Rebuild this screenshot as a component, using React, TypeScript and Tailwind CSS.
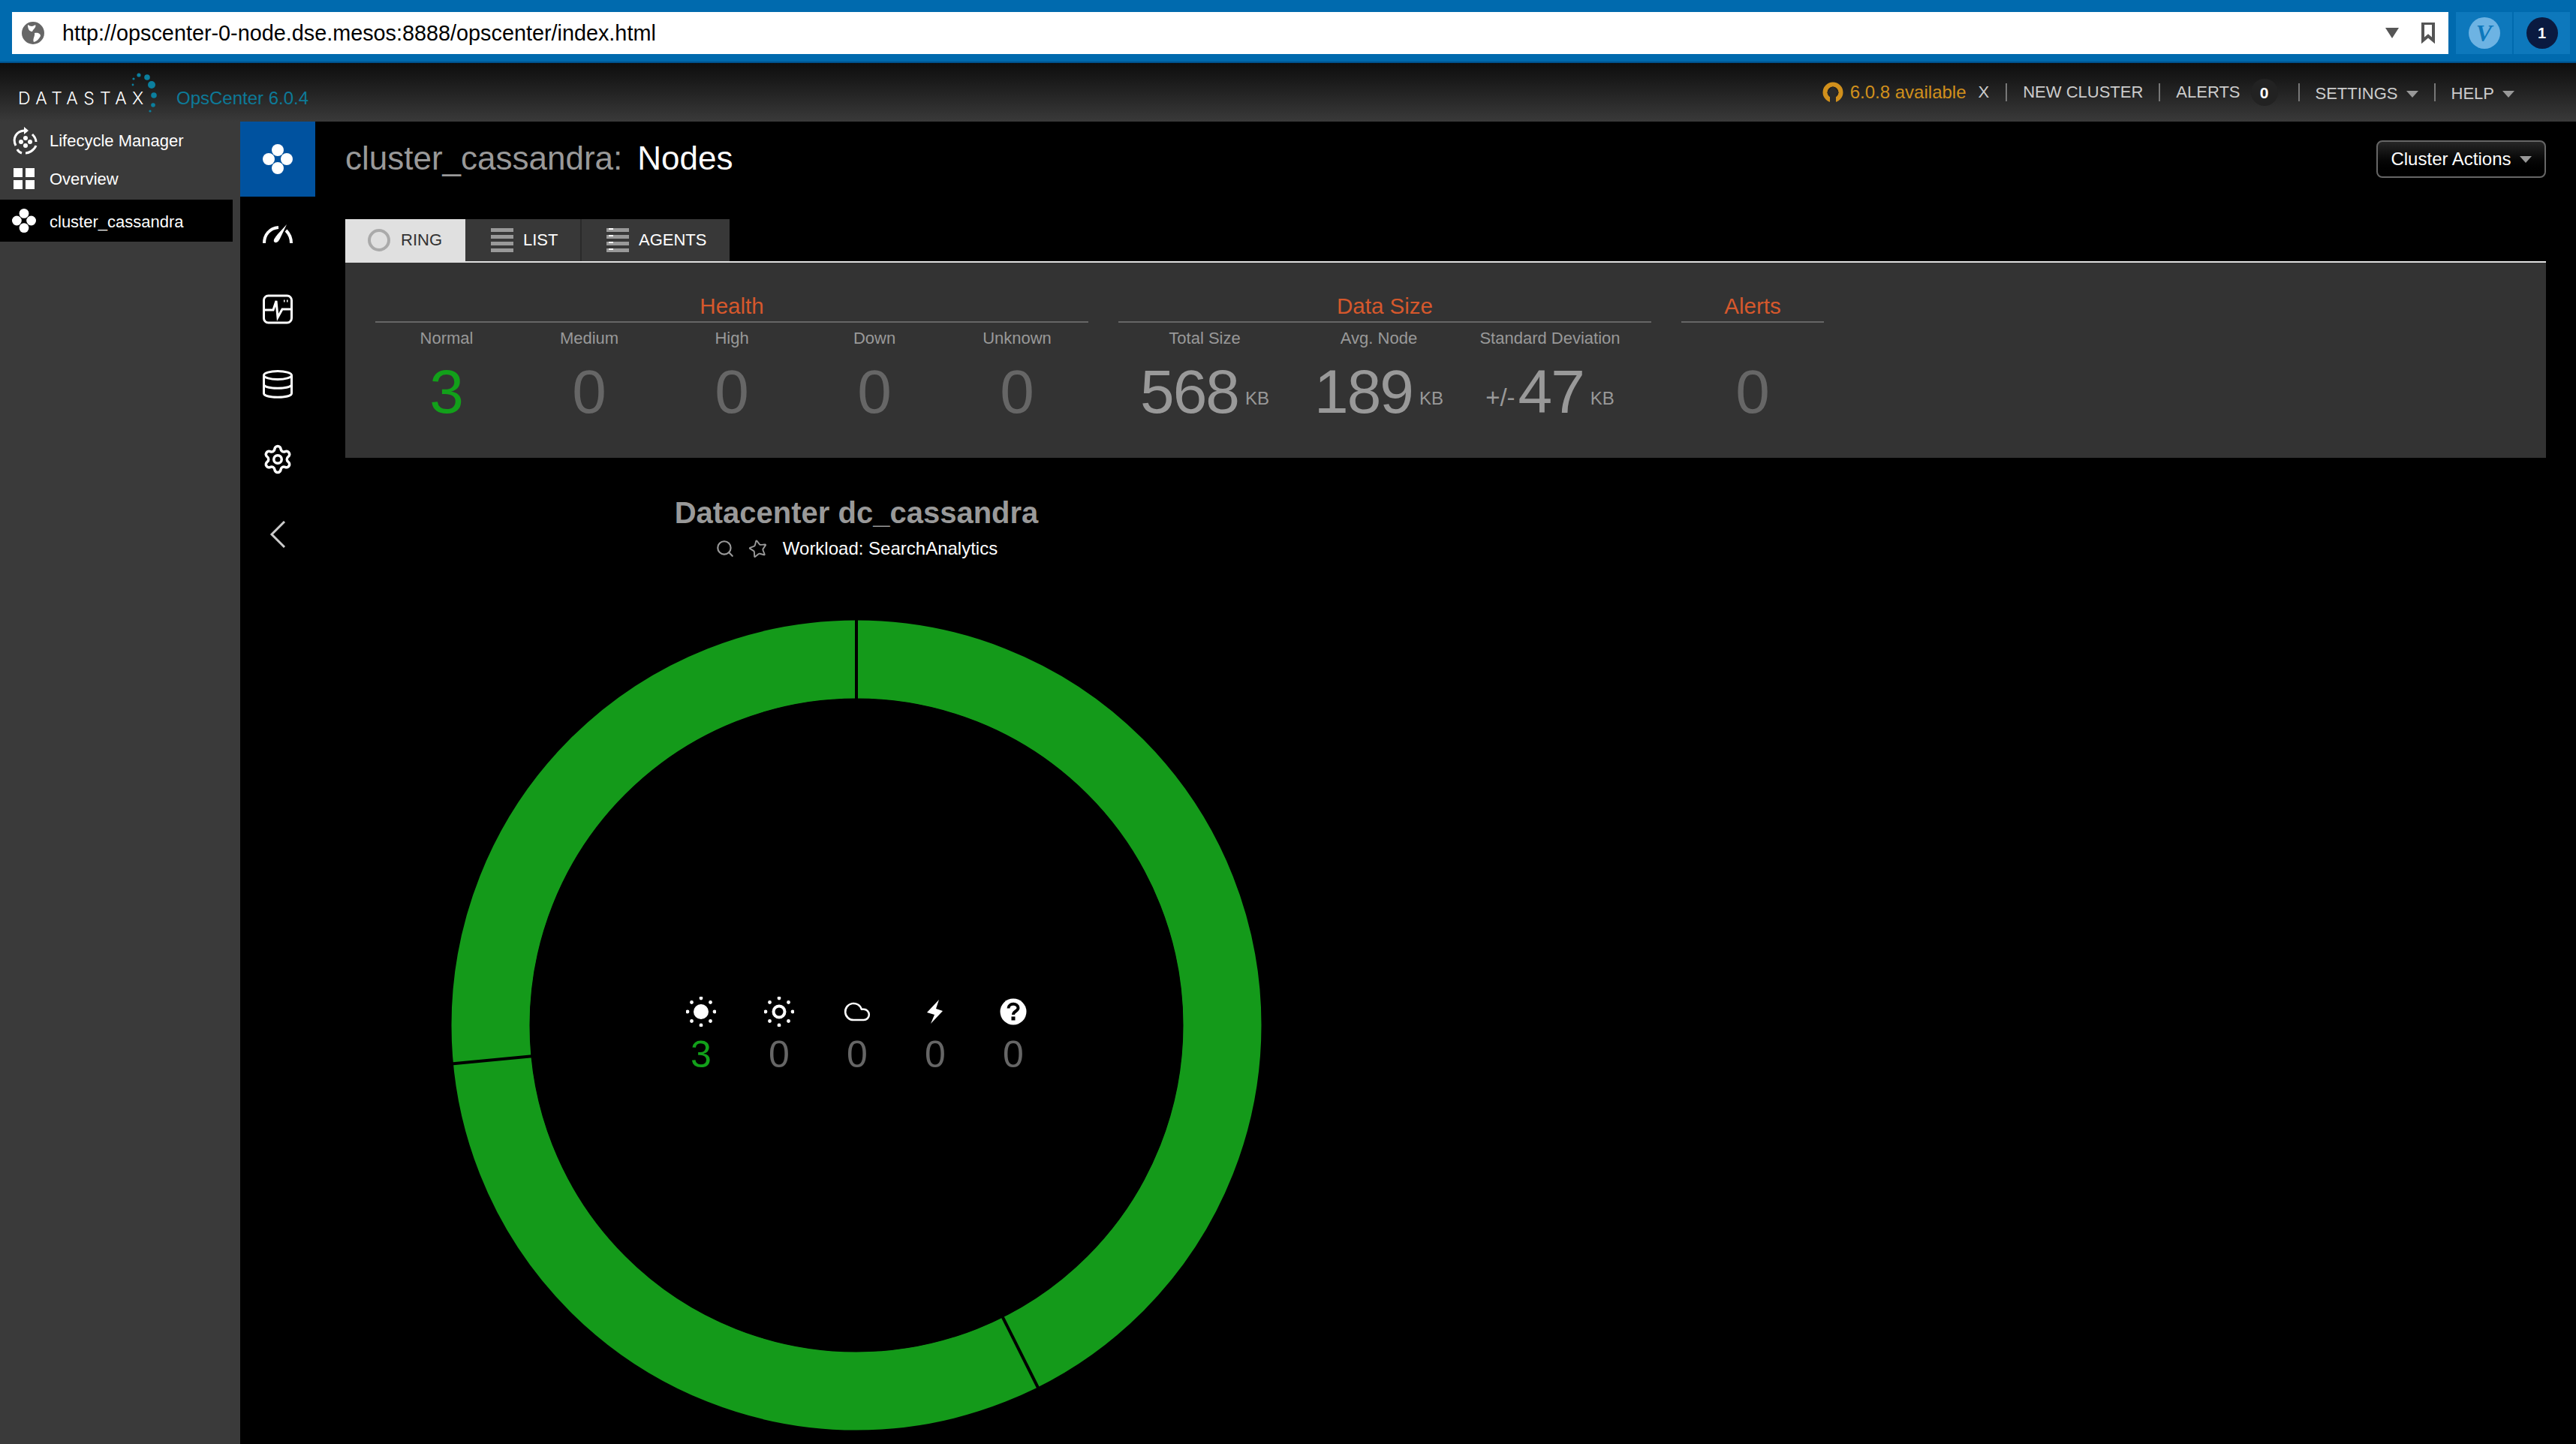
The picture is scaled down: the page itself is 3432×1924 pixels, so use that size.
import React from 'react';
import { Settings, Search, Star, Cloud } from 'lucide-react';

/* ---------- data ---------- */
const HEALTH = [
    { label: 'Normal', value: '3', color: 'text-[#12a01a]' },
    { label: 'Medium', value: '0', color: 'text-[#666666]' },
    { label: 'High', value: '0', color: 'text-[#666666]' },
    { label: 'Down', value: '0', color: 'text-[#666666]' },
    { label: 'Unknown', value: '0', color: 'text-[#666666]' },
];

/* ---------- small drawings ---------- */
function NodesIcon({ size = 40 }: { size?: number }) {
    return (
        <svg width={size} height={size} viewBox="0 0 40 40" fill="white">
            <circle cx="20" cy="8" r="8" />
            <circle cx="8" cy="20" r="8" />
            <circle cx="32" cy="20" r="8" />
            <circle cx="20" cy="32" r="8" />
        </svg>
    );
}

function Caret({ color = 'border-t-[#999999]' }: { color?: string }) {
    return <span className={`inline-block w-0 h-0 border-x-[8px] border-x-transparent border-t-[9px] ${color}`}></span>;
}

function Sep() {
    return <span className="block w-[2px] h-[24px] bg-[#777777]"></span>;
}

function SunIcon({ hollow }: { hollow?: boolean }) {
    const rays = [[20, 2], [32.5, 7.5], [38, 20], [32.5, 32.5], [20, 38], [7.5, 32.5], [2, 20], [7.5, 7.5]];
    return (
        <svg width="40" height="40" viewBox="0 0 40 40" fill="white">
            {rays.map(([x, y], i) => <circle key={i} cx={x} cy={y} r="2.4" />)}
            {hollow
                ? <circle cx="20" cy="20" r="7.5" fill="none" stroke="white" strokeWidth="4" />
                : <circle cx="20" cy="20" r="10" />}
        </svg>
    );
}

function BoltIcon() {
    return (
        <svg width="40" height="40" viewBox="0 0 40 40" fill="white">
            <path d="M25 4 L9 21 L19 24 L14 36 L30 19 L21 16 Z" />
        </svg>
    );
}

function QuestionIcon() {
    return (
        <svg width="40" height="40" viewBox="0 0 40 40">
            <circle cx="20" cy="20" r="17.5" fill="white" />
            <path d="M13.5 15.5 C13.5 8 26.5 8 26.5 15 C26.5 19.5 20 19 20 24" fill="none" stroke="black" strokeWidth="4" />
            <rect x="17.5" y="26.5" width="5" height="5" fill="black" />
        </svg>
    );
}

function Logo() {
    return (
        <div className="relative flex items-center w-[196px]">
            <span className="font-['Inter',sans-serif] font-light text-[23px] leading-none tracking-[7.4px] text-white">DATASTAX</span>
            <svg className="absolute left-[145px] -top-[26px]" width="50" height="60" viewBox="0 0 50 60" fill="#0b7f9e">
                <circle cx="33" cy="19" r="5" />
                <circle cx="36" cy="33" r="3.8" />
                <circle cx="27" cy="9" r="3.8" />
                <circle cx="16" cy="6" r="2.6" />
                <circle cx="9" cy="11" r="1.6" />
                <circle cx="8" cy="19" r="1.4" />
                <circle cx="35" cy="46" r="2.8" />
                <circle cx="31" cy="54" r="1.6" />
            </svg>
        </div>
    );
}

/* ---------- browser chrome ---------- */
function BrowserBar() {
    return (
        <div className="h-[84px] shrink-0 bg-[#006aae] border-b-[2px] border-[#00518c] flex items-start gap-[10px] pl-[16px] pr-[8px] pt-[16px]">
            <div className="flex-1 h-[56px] bg-white flex items-center pl-[12px] pr-[18px]">
                <svg width="32" height="32" viewBox="0 0 32 32" className="shrink-0">
                    <circle cx="16" cy="16" r="15" fill="#666666" />
                    <path d="M9 5 C13 8 17 7 19 5 C21 8 16 11 15 14 C12 14 9 12 9 5 Z M18 16 C23 15 26 17 26 20 C24 24 21 27 17 28 C15 24 19 20 18 16 Z" fill="white" />
                </svg>
                <span className="ml-[23px] text-[28.8px] text-black leading-none">http://opscenter-0-node.dse.mesos:8888/opscenter/index.html</span>
                <span className="ml-auto inline-block w-0 h-0 border-x-[9px] border-x-transparent border-t-[14px] border-t-[#555555]"></span>
                <svg width="18" height="28" viewBox="0 0 18 28" className="ml-[30px]" fill="none" stroke="#555555" strokeWidth="4">
                    <path d="M2 1 H16 V24 L9 18 L2 24 Z" />
                </svg>
            </div>
            <div className="flex gap-[2px]">
                <div className="w-[75px] h-[56px] bg-[#0d78bc] flex items-center justify-center">
                    <span className="w-[42px] h-[42px] rounded-full bg-[#6db3e3] flex items-center justify-center font-['Liberation_Serif',serif] font-bold italic text-[32px] leading-none text-[#0d78bc]">V</span>
                </div>
                <div className="w-[75px] h-[56px] bg-[#0d78bc] flex items-center justify-center">
                    <span className="w-[42px] h-[42px] rounded-full bg-[#0a1a40] flex items-center justify-center font-bold text-[20px] leading-none text-white">1</span>
                </div>
            </div>
        </div>
    );
}

/* ---------- app header ---------- */
function TopNav() {
    return (
        <header className="h-[78px] shrink-0 bg-gradient-to-b from-[#0e0e0e] to-[#3a3a3a] flex items-center pl-[24px] pr-[82px]">
            <div className="flex items-center mt-[16px]">
                <Logo />
                <span className="ml-[15px] text-[24px] leading-none text-[#0d7a98]">OpsCenter 6.0.4</span>
            </div>
            <div className="ml-auto flex items-center text-[22px] leading-none text-[#cccccc]">
                <svg width="28" height="28" viewBox="0 0 28 28" fill="none" className="mr-[9px]">
                    <circle cx="14" cy="14" r="10.5" stroke="#d1901c" strokeWidth="6" />
                    <path d="M14 6 L22 15 H18 V28 H10 V15 H6 Z" fill="#2a2a2a" />
                </svg>
                <span className="text-[24px] text-[#d1901c]">6.0.8 available</span>
                <span className="ml-[16px] mr-[22px] font-light">X</span>
                <Sep />
                <span className="mx-[21px]">NEW CLUSTER</span>
                <Sep />
                <span className="ml-[21px]">ALERTS</span>
                <span className="ml-[14px] w-[36px] h-[36px] rounded-full bg-[#222222] flex items-center justify-center font-bold text-[21px] text-white">0</span>
                <span className="ml-[27px]"><Sep /></span>
                <span className="ml-[21px] mt-[4px]">SETTINGS</span>
                <span className="ml-[11px] mr-[21px]"><Caret /></span>
                <Sep />
                <span className="ml-[21px] mt-[4px]">HELP</span>
                <span className="ml-[11px]"><Caret /></span>
            </div>
        </header>
    );
}

/* ---------- left columns ---------- */
function Sidebar() {
    return (
        <aside className="w-[320px] shrink-0 bg-[#3a3a3a] pt-[3px] text-[22px] text-white">
            <div className="h-[44px] flex items-center pl-[17px]">
                <svg width="34" height="38" viewBox="0 0 34 38" fill="none" stroke="white" strokeWidth="3" className="shrink-0">
                    <path d="M4 26 C-1 16 5 7 15 6" />
                    <path d="M15 1 L21 6 L15 11 Z" fill="white" stroke="none" />
                    <path d="M26 11 C30 15 31 18 31 21" />
                    <path d="M31 26 C28 33 21 36 17 36" />
                    <path d="M12 36 C9 35 7 33 6 31" />
                    <circle cx="11" cy="21" r="3" fill="white" stroke="none" />
                    <circle cx="17" cy="16" r="3" fill="white" stroke="none" />
                    <circle cx="23" cy="21" r="3" fill="white" stroke="none" />
                    <circle cx="17" cy="26" r="3" fill="white" stroke="none" />
                </svg>
                <span className="ml-[15px]">Lifecycle Manager</span>
            </div>
            <div className="h-[56px] flex items-center pl-[18px] mt-[1px]">
                <div className="grid grid-cols-2 gap-[4px] w-[28px] shrink-0">
                    <span className="h-[12px] bg-white"></span>
                    <span className="h-[12px] bg-white"></span>
                    <span className="h-[12px] bg-white"></span>
                    <span className="h-[12px] bg-white"></span>
                </div>
                <span className="ml-[20px]">Overview</span>
            </div>
            <div className="h-[56px] w-[310px] bg-black flex items-center pl-[16px]">
                <NodesIcon size={32} />
                <span className="ml-[18px] mt-[3px]">cluster_cassandra</span>
            </div>
        </aside>
    );
}

function IconRail() {
    return (
        <nav className="w-[100px] shrink-0 flex flex-col bg-black">
            <div className="h-[100px] bg-[#00529f] flex items-center justify-center"><NodesIcon /></div>
            <div className="h-[100px] flex items-center justify-center">
                <svg width="40" height="26" viewBox="0 0 40 26" fill="none" stroke="white" strokeWidth="4">
                    <path d="M2 25 C2 14 9 5 21 4" />
                    <path d="M31 8 C35 12 38 17 38 25" />
                    <path d="M32 0 L20 13 C17 17 14 20 15 23 C18 26 21 23 23 19 Z" fill="white" stroke="none" />
                </svg>
            </div>
            <div className="h-[100px] flex items-center justify-center">
                <svg width="40" height="40" viewBox="0 0 40 40" fill="none" stroke="white" strokeWidth="3">
                    <rect x="1.5" y="2" width="37" height="36" rx="6" />
                    <path d="M2 21 H14 L18 9 L20 31 L26 20 H38" />
                    <path d="M28 9 H29.5 M32 9 H33.5" />
                </svg>
            </div>
            <div className="h-[100px] flex items-center justify-center">
                <svg width="40" height="38" viewBox="0 0 40 38" fill="none" stroke="white" strokeWidth="3">
                    <ellipse cx="20" cy="7" rx="18.5" ry="5.5" />
                    <path d="M1.5 7 V31 C1.5 38 38.5 38 38.5 31 V7" />
                    <path d="M1.5 19 C1.5 26 38.5 26 38.5 19" />
                </svg>
            </div>
            <div className="h-[100px] flex items-center justify-center"><Settings size={42} color="white" strokeWidth={2} /></div>
            <div className="h-[100px] flex items-center justify-center">
                <svg width="22" height="36" viewBox="0 0 22 36" fill="none" stroke="#cccccc" strokeWidth="3">
                    <path d="M20 1 L3 18 L20 35" />
                </svg>
            </div>
        </nav>
    );
}

/* ---------- summary panel ---------- */
function GroupTitle({ children }: { children: React.ReactNode }) {
    return (
        <div className="h-[42px] border-b-[2px] border-[#666666] flex items-center justify-center text-[29.5px] leading-none text-[#d6582c]">
            {children}
        </div>
    );
}

function SizeCell({ width, label, prefix, value }: { width: string; label: string; prefix?: string; value: string }) {
    return (
        <div className={`${width} flex flex-col items-center`}>
            <div className="h-[40px] flex items-center text-[22px] text-[#999999] whitespace-nowrap">{label}</div>
            <div className="h-[104px] flex items-center text-[#999999] leading-none">
                {prefix && <span className="text-[33px] mt-[14px] mr-[4px]">{prefix}</span>}
                <span className="text-[82px] tracking-[-2px]">{value}</span>
                <span className="text-[24px] mt-[18px] ml-[9px]">KB</span>
            </div>
        </div>
    );
}

function SummaryPanel() {
    return (
        <div className="h-[260px] bg-[#333333] pl-[40px] pt-[38px] flex gap-[40px]">
            <div className="w-[950px]">
                <GroupTitle>Health</GroupTitle>
                <div className="grid grid-cols-5">
                    {HEALTH.map((h) => (
                        <div key={h.label} className="flex flex-col items-center">
                            <div className="h-[40px] flex items-center text-[22px] text-[#999999]">{h.label}</div>
                            <div className={`h-[104px] flex items-center text-[82px] leading-none ${h.color}`}>{h.value}</div>
                        </div>
                    ))}
                </div>
            </div>
            <div className="w-[710px]">
                <GroupTitle>Data Size</GroupTitle>
                <div className="flex">
                    <SizeCell width="w-[230px]" label="Total Size" value="568" />
                    <SizeCell width="w-[234px]" label="Avg. Node" value="189" />
                    <SizeCell width="w-[222px]" label="Standard Deviation" prefix="+/-" value="47" />
                </div>
            </div>
            <div className="w-[190px]">
                <GroupTitle>Alerts</GroupTitle>
                <div className="flex flex-col items-center">
                    <div className="h-[40px]"></div>
                    <div className="h-[104px] flex items-center text-[82px] leading-none text-[#666666]">0</div>
                </div>
            </div>
        </div>
    );
}

/* ---------- ring ---------- */
const STATES = [
    { icon: <SunIcon />, value: '3', color: 'text-[#12a01a]' },
    { icon: <SunIcon hollow />, value: '0', color: 'text-[#666666]' },
    { icon: <Cloud size={38} color="white" strokeWidth={1.6} />, value: '0', color: 'text-[#666666]' },
    { icon: <BoltIcon />, value: '0', color: 'text-[#666666]' },
    { icon: <QuestionIcon />, value: '0', color: 'text-[#666666]' },
];

function Ring() {
    return (
        <div className="relative w-[1100px] h-[1100px] mt-[69px]">
            <svg width="1100" height="1100" viewBox="0 0 1100 1100">
                <circle cx="550" cy="550" r="487.5" fill="none" stroke="#149a1a" strokeWidth="104" />
                <line x1="550" y1="550" x2="550" y2="0" stroke="black" strokeWidth="4" />
                <line x1="550" y1="550" x2="5" y2="602" stroke="black" strokeWidth="4" />
                <line x1="550" y1="550" x2="795" y2="1039" stroke="black" strokeWidth="4" />
                <circle cx="550" cy="550" r="435" fill="black" />
            </svg>
            <div className="absolute left-[291px] top-[512px] w-[520px] grid grid-cols-5">
                {STATES.map((s, i) => (
                    <div key={i} className="flex flex-col items-center">
                        <div className="h-[40px] flex items-center justify-center">{s.icon}</div>
                        <div className={`mt-[12px] text-[50px] leading-[50px] ${s.color}`}>{s.value}</div>
                    </div>
                ))}
            </div>
        </div>
    );
}

/* ---------- tabs ---------- */
function Tabs() {
    return (
        <div className="flex h-[58px] border-b-[2px] border-[#e0e0e0] text-[22px] leading-none">
            <div className="w-[160px] bg-[#e0e0e0] text-[#333333] flex items-center pl-[30px]">
                <span className="block w-[30px] h-[30px] rounded-full border-[4px] border-[#aaaaaa]"></span>
                <span className="ml-[14px]">RING</span>
            </div>
            <div className="w-[155px] bg-[#383838] border-r-[2px] border-[#2a2a2a] text-white flex items-center pl-[34px]">
                <div className="w-[30px] flex flex-col gap-[4px]">
                    <span className="h-[5px] bg-[#999999]"></span>
                    <span className="h-[5px] bg-[#999999]"></span>
                    <span className="h-[5px] bg-[#999999]"></span>
                    <span className="h-[5px] bg-[#999999]"></span>
                </div>
                <span className="ml-[13px]">LIST</span>
            </div>
            <div className="w-[197px] bg-[#383838] text-white flex items-center pl-[33px]">
                <div className="w-[30px] flex flex-col gap-[4px]">
                    <span className="h-[5px] bg-[#999999] pl-[3px]"><span className="block w-[6px] h-[2px] bg-white"></span></span>
                    <span className="h-[5px] bg-[#999999] pl-[3px]"><span className="block w-[6px] h-[2px] bg-white"></span></span>
                    <span className="h-[5px] bg-[#999999] pl-[3px]"><span className="block w-[6px] h-[2px] bg-white"></span></span>
                    <span className="h-[5px] bg-[#999999] pl-[3px]"><span className="block w-[6px] h-[2px] bg-white"></span></span>
                </div>
                <span className="ml-[13px]">AGENTS</span>
            </div>
        </div>
    );
}

export default function App() {
    return (
        <div className="w-[3432px] h-[1924px] overflow-hidden flex flex-col bg-black font-['Liberation_Sans',Arial,sans-serif]">
            <BrowserBar />
            <TopNav />
            <div className="flex-1 flex min-h-0">
                <Sidebar />
                <IconRail />
                <main className="flex-1 min-w-0 px-[40px]">
                    <div className="h-[100px] mb-[30px] flex items-center">
                        <h1 className="mb-[3px] text-[44px] leading-none text-[#999999]">cluster_cassandra:</h1>
                        <span className="ml-[20px] mb-[3px] text-[44px] leading-none text-white">Nodes</span>
                        <button className="ml-auto w-[226px] h-[50px] rounded-[8px] border-[2px] border-[#666666] bg-gradient-to-b from-[#262626] to-black flex items-center justify-center gap-[11px] text-[24px] leading-none text-white">
                            Cluster Actions
                            <Caret />
                        </button>
                    </div>
                    <Tabs />
                    <SummaryPanel />
                    <section className="ml-[131px] w-[1100px] flex flex-col items-center">
                        <h2 className="mt-[50px] h-[46px] text-[40px] leading-[46px] font-bold text-[#999999]">Datacenter dc_cassandra</h2>
                        <div className="mt-[11px] h-[30px] flex items-center -translate-y-[1px]">
                            <Search size={26} color="#999999" strokeWidth={2} />
                            <Star size={26} color="#999999" strokeWidth={1.75} className="ml-[18px] -rotate-12" />
                            <span className="ml-[20px] text-[24px] leading-none text-white">Workload: SearchAnalytics</span>
                        </div>
                        <Ring />
                    </section>
                </main>
            </div>
        </div>
    );
}
